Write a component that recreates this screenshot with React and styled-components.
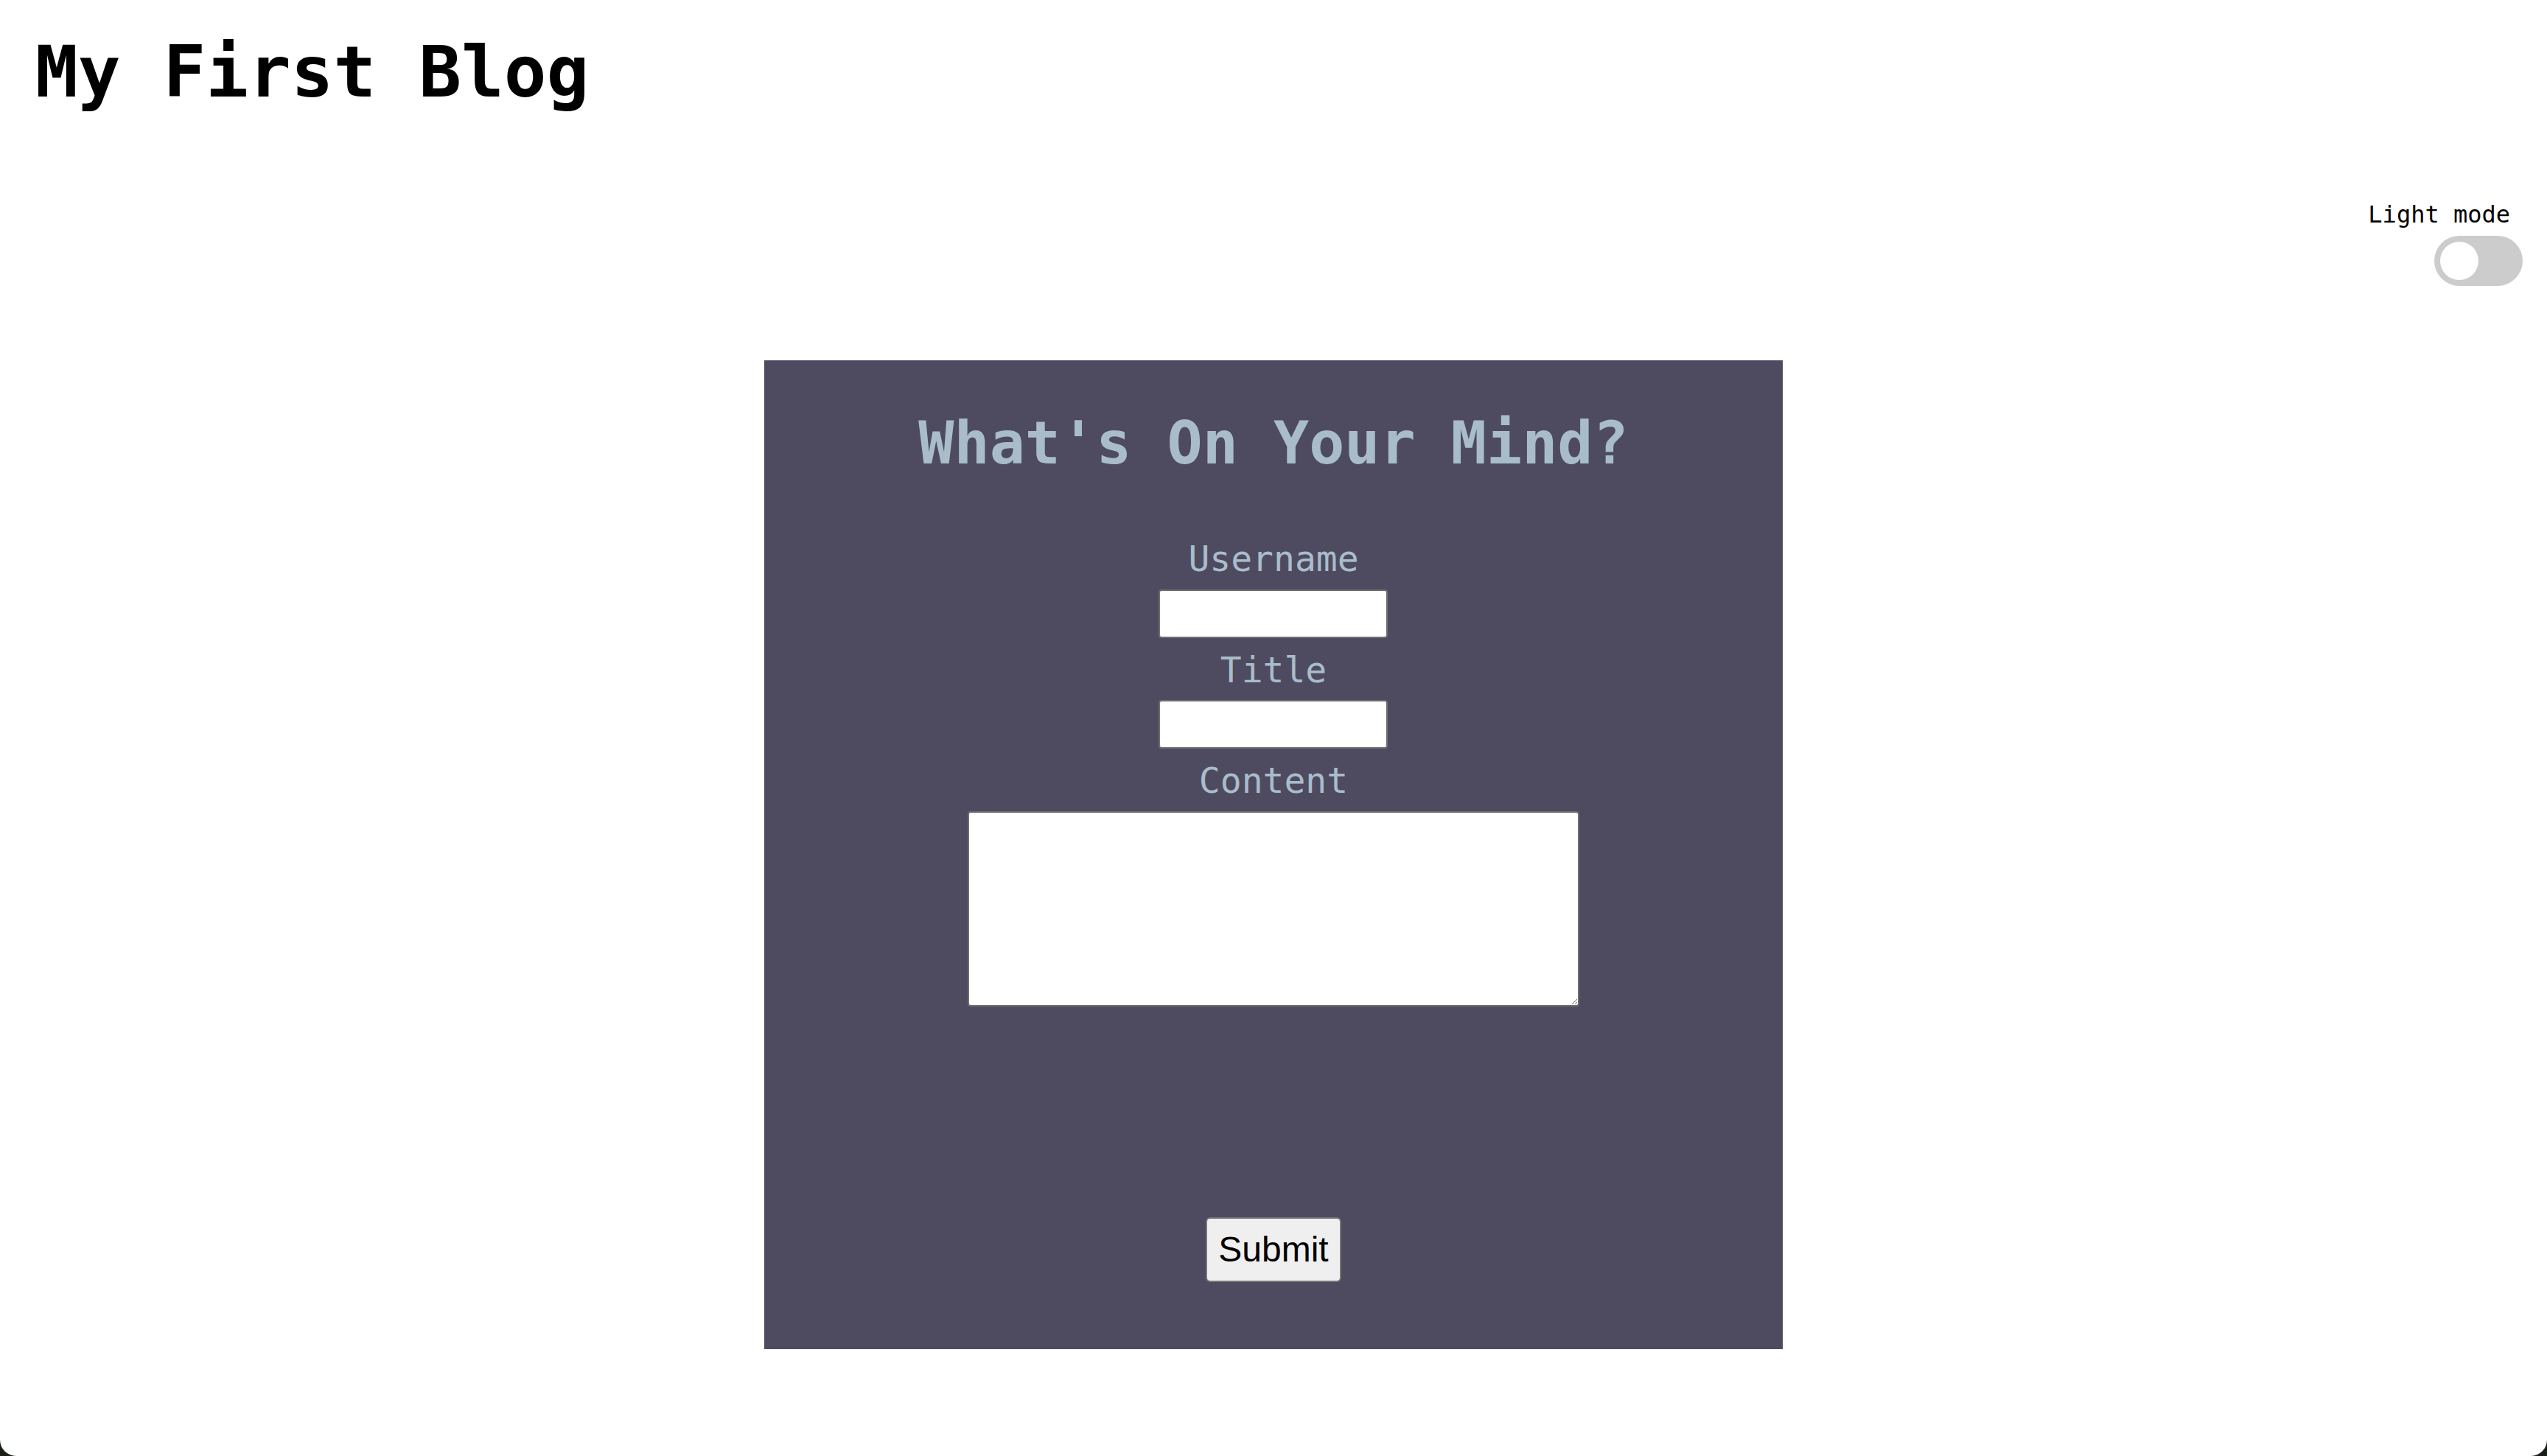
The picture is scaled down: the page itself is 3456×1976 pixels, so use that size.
import React, { useState } from "react";
import styled, { createGlobalStyle } from "styled-components";

const GlobalStyle = createGlobalStyle`
  html {
    background: #1b2119;
  }
  body {
    margin: 0;
    background: #1b2119;
  }
  #root {
    min-height: 1976px;
    background: #ffffff;
    border-radius: 0 0 22px 22px;
    overflow: hidden;
  }
`;

const Page = styled.div`
  display: flex;
  flex-direction: column;
  font-family: "DejaVu Sans Mono", "Liberation Mono", monospace;
  color: #000;
`;

const Header = styled.h1`
  margin: 42px 0 0 0;
  padding-left: 48px;
  font-size: 96px;
  line-height: 112px;
  font-weight: bold;
`;

const ThemeBar = styled.div`
  display: flex;
  flex-direction: column;
  align-items: flex-end;
  padding-right: 33px;
  margin-top: 118px;
  gap: 10px;
`;

const ThemeLabel = styled.span`
  font-size: 32px;
  line-height: 38px;
  margin-right: 17px;
`;

const Switch = styled.label`
  position: relative;
  display: inline-block;
  width: 120px;
  height: 68px;
  cursor: pointer;

  input {
    opacity: 0;
    width: 0;
    height: 0;
  }
`;

const Slider = styled.span`
  position: absolute;
  inset: 0;
  border-radius: 34px;
  background: ${(p) => (p.$on ? "#2196f3" : "#cccccc")};
  transition: background 0.2s;

  &::before {
    content: "";
    position: absolute;
    width: 52px;
    height: 52px;
    left: 8px;
    top: 8px;
    border-radius: 50%;
    background: #ffffff;
    transform: translateX(${(p) => (p.$on ? "52px" : "0")});
    transition: transform 0.2s;
  }
`;

const Panel = styled.section`
  width: 40%;
  margin: 101px auto 0;
  background: #4e4b61;
  color: #a9bdc9;
  display: flex;
  flex-direction: column;
  align-items: center;
  padding: 66px 0 91px;
  box-sizing: border-box;
`;

const PanelTitle = styled.h2`
  margin: 0 0 67px;
  font-size: 80px;
  line-height: 93px;
  font-weight: bold;
`;

const Form = styled.form`
  width: 100%;
  display: flex;
  flex-direction: column;
  align-items: center;
`;

const FieldLabel = styled.label`
  font-size: 48px;
  line-height: 56px;
  margin: 15px 0 13.5px;
`;

const TextInput = styled.input`
  box-sizing: border-box;
  width: 311px;
  height: 66px;
  border: 2px solid #6e6e6e;
  border-radius: 4px;
  background: #ffffff;
  font-size: 26px;
  padding: 2px 4px;
`;

const ContentArea = styled.textarea`
  box-sizing: border-box;
  width: 60%;
  height: 265px;
  border: 2px solid #6e6e6e;
  border-radius: 4px;
  background: #ffffff;
  font-size: 26px;
  padding: 4px;
  resize: both;
`;

const SubmitButton = styled.button`
  margin-top: 286px;
  font-family: "Liberation Sans", Arial, sans-serif;
  font-size: 48px;
  line-height: 56px;
  padding: 14px 15px;
  color: #000;
  background: #efefef;
  border: 2px solid #767676;
  border-radius: 6px;
  cursor: pointer;
`;

export default function App() {
  const [dark, setDark] = useState(false);
  return (
    <>
      <GlobalStyle />
      <Page>
        <Header>My First Blog</Header>
        <ThemeBar>
          <ThemeLabel>Light mode</ThemeLabel>
          <Switch>
            <input
              type="checkbox"
              checked={dark}
              onChange={() => setDark(!dark)}
            />
            <Slider $on={dark} />
          </Switch>
        </ThemeBar>
        <Panel>
          <PanelTitle>What's On Your Mind?</PanelTitle>
          <Form onSubmit={(e) => e.preventDefault()}>
            <FieldLabel htmlFor="username">Username</FieldLabel>
            <TextInput id="username" type="text" />
            <FieldLabel htmlFor="title">Title</FieldLabel>
            <TextInput id="title" type="text" />
            <FieldLabel htmlFor="content">Content</FieldLabel>
            <ContentArea id="content" />
            <SubmitButton type="submit">Submit</SubmitButton>
          </Form>
        </Panel>
      </Page>
    </>
  );
}
